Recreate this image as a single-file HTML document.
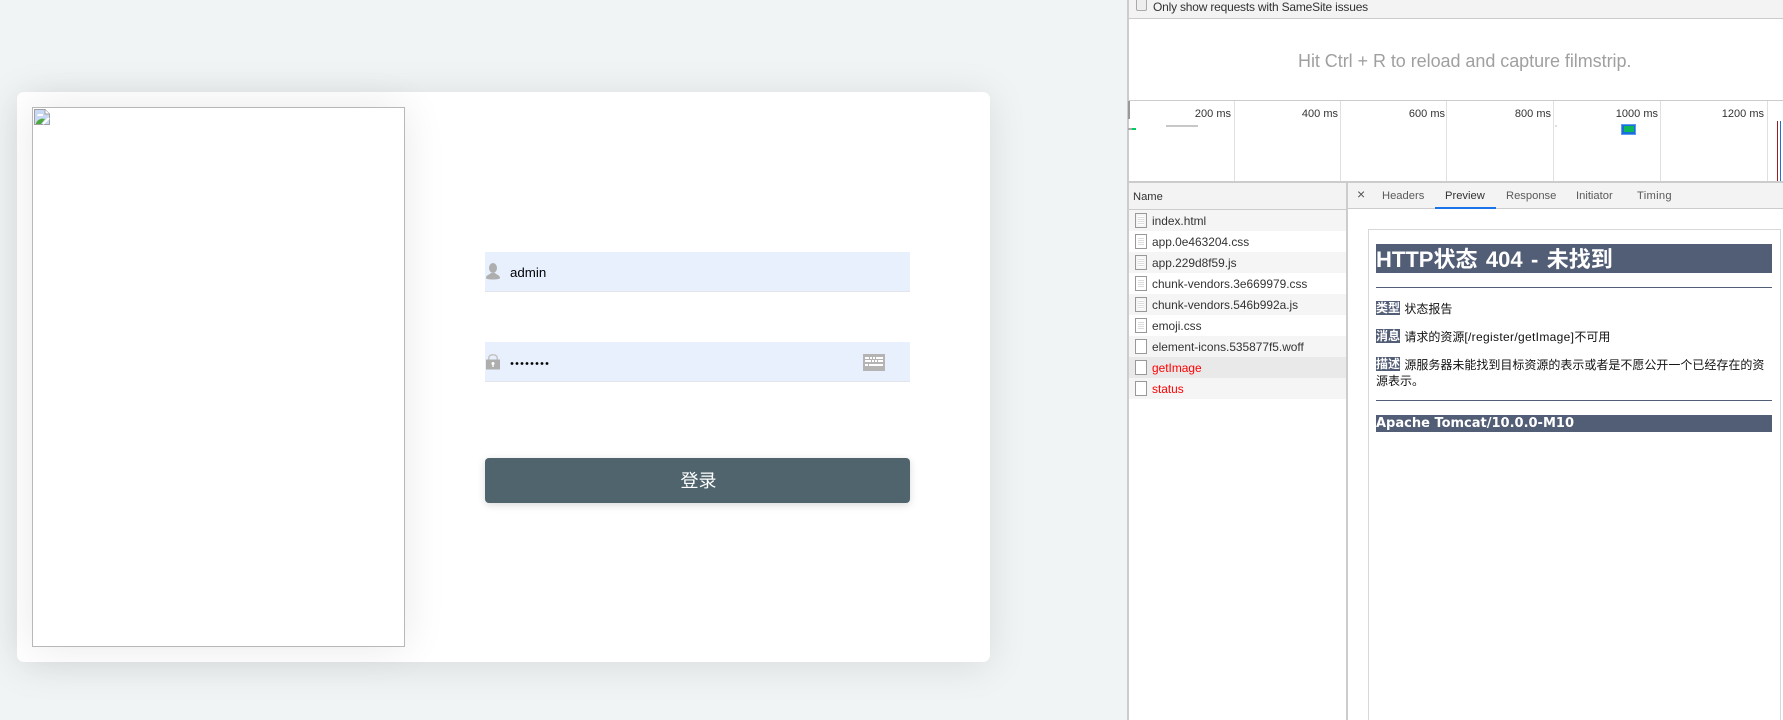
<!DOCTYPE html>
<html><head><meta charset="utf-8"><style>
*{box-sizing:border-box}
html,body{margin:0;padding:0;width:1783px;height:720px;overflow:hidden;background:#f0f4f5;font-family:"Liberation Sans","Noto Sans CJK SC",sans-serif}
.a{position:absolute;white-space:nowrap}
.row{position:absolute;left:1129px;width:217px;height:21px;font-size:11.9px;line-height:22px;padding-left:23px;color:#333}
.row i{position:absolute;left:6px;top:3px;width:12px;height:15px;background:#fff;border:1px solid #999}
.row i.d{background:repeating-linear-gradient(#fff 0 1px,#ddd 1px 2px);background-clip:content-box;padding:2px}
.t{position:absolute;top:104px;width:70px;font-size:11px;color:#333;line-height:20px;text-align:right}
.v{position:absolute;top:101px;width:1px;height:80px;background:#e0e0e0}
.tab{position:absolute;top:188px;font-size:11.2px;color:#5a5a5a;line-height:16px}
.bl{background:#525d76;color:#fff;font-weight:bold}
.p{position:absolute;left:1376px;font-size:12px;line-height:16px;color:#111}
.p .bl{position:relative;top:-1px;margin-right:1px}
.p b{font-weight:normal;letter-spacing:.33px}
</style></head><body>
<div class="a" style="left:17px;top:92px;width:973px;height:570px;background:#fff;border-radius:7px;box-shadow:0 4px 40px rgba(0,0,0,.1)"></div>
<div class="a" style="left:32px;top:107px;width:373px;height:540px;background:#fff;border:1px solid #b8b8b8;box-shadow:0 0 40px rgba(0,0,0,.09)">
<svg width="16" height="16" viewBox="0 0 16 16" style="position:absolute;left:1px;top:1px"><path d="M.5.5H11L15.5 5V15.5H.5Z" fill="#c9d9f5" stroke="#a0a0a0"/><path d="M11 .5V5H15.500" fill="#fff" stroke="#a0a0a0"/><path d="M2 14C4 10 8 9 11 10L7 15H2Z" fill="#4fa83d"/><path d="M9 15L15 9" stroke="#fff" stroke-width="2"/><path d="M4 5h5v2H3z" fill="#fff"/></svg></div>

<div class="a" style="left:485px;top:252px;width:425px;height:40px;background:#e8f0fe;border-bottom:1px solid #e2e6ec"></div>
<svg class="a" style="left:485px;top:262px" width="16" height="18" viewBox="0 0 16 18"><ellipse cx="8" cy="6" rx="4" ry="5" fill="#aeaeae"/><path d="M1 16C1 13 5 12.500 6 11H10C11 12.500 15 13 15 16C15 17 12 17.500 8 17.500S1 17 1 16Z" fill="#aeaeae"/></svg>
<div class="a" style="left:510px;top:263px;font-size:13.300px;line-height:20px;color:#000">admin</div>

<div class="a" style="left:485px;top:342px;width:425px;height:40px;background:#e8f0fe;border-bottom:1px solid #e2e6ec"></div>
<svg class="a" style="left:485px;top:353px" width="16" height="17" viewBox="0 0 16 17"><path d="M3 7V5.500C3 2.500 5 1 8 1S13 2.500 13 5.500V7H11.500V5.500C11.500 3.500 10 2.500 8 2.500S4.500 3.500 4.500 5.500V7Z" fill="#c4c4c4"/><path d="M1 6.500H15V16.500H1Z" fill="#aeaeae"/><circle cx="8" cy="10.500" r="1.500" fill="#fff"/><rect x="7.300" y="11" width="1.400" height="3" fill="#fff"/></svg>
<svg class="a" style="left:510px;top:352px" width="40" height="20"><g fill="#000"><circle cx="2" cy="11.500" r="1.400"/><circle cx="7" cy="11.500" r="1.400"/><circle cx="12" cy="11.500" r="1.400"/><circle cx="17" cy="11.500" r="1.400"/><circle cx="22" cy="11.500" r="1.400"/><circle cx="27" cy="11.500" r="1.400"/><circle cx="32" cy="11.500" r="1.400"/><circle cx="37" cy="11.500" r="1.400"/></g></svg>
<svg class="a" style="left:863px;top:354px" width="22" height="17" viewBox="0 0 22 17"><rect width="22" height="17" fill="#b4b4b4"/><g fill="#fff"><rect x="2" y="3" width="4" height="2"/><rect x="7" y="3" width="2" height="2"/><rect x="10" y="3" width="2" height="2"/><rect x="13" y="3" width="7" height="2"/><rect x="2" y="6" width="6" height="2"/><rect x="9" y="6" width="2" height="2"/><rect x="12" y="6" width="2" height="2"/><rect x="15" y="6" width="5" height="2"/><rect x="2" y="10" width="3" height="2"/><rect x="6" y="10" width="14" height="2"/></g></svg>

<div class="a" style="left:485px;top:458px;width:425px;height:45px;background:#50646e;border-radius:4px;box-shadow:0 2px 8px rgba(0,0,0,.15);color:#fff;font-size:18px;line-height:47px;text-align:center;padding-left:2px">登录</div>

<!-- devtools -->
<div class="a" style="left:1127px;top:0;width:656px;height:720px;background:#fff;border-left:2px solid #ccc"></div>
<div class="a" style="left:1129px;top:0;width:654px;height:19px;background:#f3f3f3;border-bottom:1px solid #ccc"></div>
<div class="a" style="left:1136px;top:0;width:11px;height:11px;background:#eee;border:1px solid #aaa;border-top:none;border-radius:0 0 2px 2px"></div>
<div class="a" style="left:1153px;top:-1px;font-size:12px;line-height:16px;color:#333;letter-spacing:-.2px">Only show requests with SameSite issues</div>
<div class="a" style="left:1298px;top:49px;font-size:18px;line-height:24px;color:#a0a0a0;letter-spacing:-.05px">Hit Ctrl + R to reload and capture filmstrip.</div>

<div class="a" style="left:1129px;top:100px;width:654px;height:1px;background:#ccc"></div>
<div class="v" style="left:1234px"></div>
<div class="v" style="left:1340px"></div>
<div class="v" style="left:1446px"></div>
<div class="v" style="left:1553px"></div>
<div class="v" style="left:1660px"></div>
<div class="v" style="left:1767px"></div>
<div class="a" style="left:1128px;top:101px;width:2px;height:18px;background:#999"></div>
<div class="t" style="left:1161px">200 ms</div>
<div class="t" style="left:1268px">400 ms</div>
<div class="t" style="left:1375px">600 ms</div>
<div class="t" style="left:1481px">800 ms</div>
<div class="t" style="left:1588px">1000 ms</div>
<div class="t" style="left:1694px">1200 ms</div>
<div class="a" style="left:1166px;top:125px;width:32px;height:2px;background:#c8c8c8"></div>
<div class="a" style="left:1555px;top:125px;width:2px;height:2px;background:#ddd"></div>
<div class="a" style="left:1128px;top:128px;width:4px;height:2px;background:#aaa"></div>
<div class="a" style="left:1132px;top:128px;width:4px;height:2px;background:#0c6"></div>
<div class="a" style="left:1621px;top:124px;width:15px;height:11px;background:#1a6fdc;border:1px solid #5a9cf0"><div style="width:10px;height:6px;background:#0cb75c;margin:1px auto 0"></div></div>
<div class="a" style="left:1777px;top:121px;width:1px;height:60px;background:#a01c1c"></div>
<div class="a" style="left:1780px;top:121px;width:1px;height:60px;background:#1a73d8"></div>

<div class="a" style="left:1129px;top:181px;width:654px;height:2px;background:#ccc"></div>
<div class="a" style="left:1129px;top:183px;width:217px;height:27px;background:#f3f3f3;border-bottom:1px solid #ccc"></div>
<div class="a" style="left:1133px;top:188px;font-size:11.200px;line-height:18px;color:#333">Name</div>
<div class="a" style="left:1346px;top:181px;width:2px;height:539px;background:#ccc"></div>

<div class="row" style="top:210px;background:#f5f5f5"><i class="d"></i>index.html</div>
<div class="row" style="top:231px"><i class="d"></i>app.0e463204.css</div>
<div class="row" style="top:252px;background:#f5f5f5"><i class="d"></i>app.229d8f59.js</div>
<div class="row" style="top:273px"><i class="d"></i>chunk-vendors.3e669979.css</div>
<div class="row" style="top:294px;background:#f5f5f5"><i class="d"></i>chunk-vendors.546b992a.js</div>
<div class="row" style="top:315px"><i class="d"></i>emoji.css</div>
<div class="row" style="top:336px;background:#f5f5f5"><i></i>element-icons.535877f5.woff</div>
<div class="row" style="top:357px;background:#e9e9e9;color:#f00"><i></i>getImage</div>
<div class="row" style="top:378px;background:#f5f5f5;color:#f00"><i></i>status</div>

<div class="a" style="left:1348px;top:183px;width:435px;height:26px;background:#f3f3f3;border-bottom:1px solid #ccc"></div>
<div class="a" style="left:1357px;top:186px;font-size:14px;line-height:16px;color:#555">×</div>
<div class="tab" style="left:1382px">Headers</div>
<div class="tab" style="left:1445px;color:#333">Preview</div>
<div class="tab" style="left:1506px">Response</div>
<div class="tab" style="left:1576px">Initiator</div>
<div class="tab" style="left:1637px;letter-spacing:.3px">Timing</div>
<div class="a" style="left:1435px;top:207px;width:61px;height:2px;background:#1a73e8"></div>

<div class="a" style="left:1368px;top:229px;width:413px;height:491px;background:#fff;border:1px solid #d8d8d8;border-bottom:none"></div>
<div class="a bl" style="left:1376px;top:244px;width:396px;height:29px;font-size:22px;line-height:32px;word-spacing:2.3px">HTTP状态 404 - 未找到</div>
<div class="a" style="left:1376px;top:287px;width:396px;height:1px;background:#525d76"></div>
<div class="p" style="top:301px"><span class="bl">类型</span> 状态报告</div>
<div class="p" style="top:329px"><span class="bl">消息</span> 请求的资源<b>[/register/getImage]</b>不可用</div>
<div class="p" style="top:357px;width:396px;white-space:normal"><span class="bl">描述</span> 源服务器未能找到目标资源的表示或者是不愿公开一个已经存在的资源表示。</div>
<div class="a" style="left:1376px;top:400px;width:396px;height:1px;background:#525d76"></div>
<div class="a bl" style="left:1376px;top:415px;width:396px;height:17px;font-size:13px;line-height:18px;font-family:'DejaVu Sans','Noto Sans CJK SC',sans-serif">Apache Tomcat/10.0.0-M10</div>
</body></html>
